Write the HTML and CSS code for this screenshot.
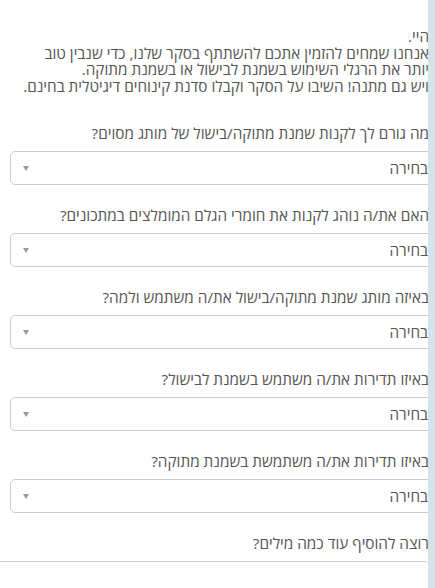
FILE: index.html
```html
<!DOCTYPE html>
<html lang="he">
<head>
<meta charset="utf-8">
<link rel="stylesheet" href="styles.css">
</head>
<body>
<div class="page">
  <div class="viewport">
    <form class="form" dir="rtl">
      <p class="intro">היי.<br>אנחנו שמחים להזמין אתכם להשתתף בסקר שלנו, כדי שנבין טוב<br>יותר את הרגלי השימוש בשמנת לבישול או בשמנת מתוקה.<br>ויש גם מתנה! השיבו על הסקר וקבלו סדנת קינוחים דיגיטלית בחינם.</p>

      <div class="field">
        <label class="label">מה גורם לך לקנות שמנת מתוקה/בישול של מותג מסוים?</label>
        <div class="select"><span>בחירה</span><span class="arrow"></span></div>
      </div>
      <div class="field">
        <label class="label">האם את/ה נוהג לקנות את חומרי הגלם המומלצים במתכונים?</label>
        <div class="select"><span>בחירה</span><span class="arrow"></span></div>
      </div>
      <div class="field">
        <label class="label">באיזה מותג שמנת מתוקה/בישול את/ה משתמש ולמה?</label>
        <div class="select"><span>בחירה</span><span class="arrow"></span></div>
      </div>
      <div class="field">
        <label class="label">באיזו תדירות את/ה משתמש בשמנת לבישול?</label>
        <div class="select"><span>בחירה</span><span class="arrow"></span></div>
      </div>
      <div class="field">
        <label class="label">באיזו תדירות את/ה משתמשת בשמנת מתוקה?</label>
        <div class="select"><span>בחירה</span><span class="arrow"></span></div>
      </div>
      <div class="field">
        <label class="label">רוצה להוסיף עוד כמה מילים?</label>
        <div class="textarea"></div>
      </div>
    </form>
  </div>
  <div class="strip"></div>
</div>
</body>
</html>
```

FILE: styles.css
```css
html, body {
  margin: 0;
  padding: 0;
  background: #fff;
}
.page {
  display: flex;
  height: 588px;
  overflow: hidden;
}
.viewport {
  flex: 1;
  overflow: hidden;
  min-width: 0;
}
.strip {
  width: 7px;
  background: #d4e4eb;
}
.form {
  margin: 0 -1px 0 0;
  padding-top: 28px;
  font-family: "Open Sans", "Liberation Sans", Arial, sans-serif;
  font-size: 15.3px;
  color: #555;
  white-space: nowrap;
}
.intro {
  margin: 0 0 29px 0;
  line-height: 16.7px;
}
.field {
  display: flex;
  flex-direction: column;
  margin-bottom: 20.5px;
}
.label {
  display: block;
  line-height: 17px;
  margin: 1px 0 9.5px 0;
}
.select {
  display: flex;
  justify-content: space-between;
  align-items: center;
  height: 34px;
  box-sizing: border-box;
  border: 1px solid #ccc;
  border-radius: 5px;
  margin: 0 -12px 0 10px;
  padding: 0 12px 0 12px;
  line-height: 17px;
}
.arrow {
  width: 0;
  height: 0;
  border-left: 3.5px solid transparent;
  border-right: 3.5px solid transparent;
  border-top: 5px solid #999;
}
.textarea {
  height: 60px;
  border: 1px solid #ccc;
  border-radius: 5px;
  margin: 0 -1px 0 -10px;
}
```
